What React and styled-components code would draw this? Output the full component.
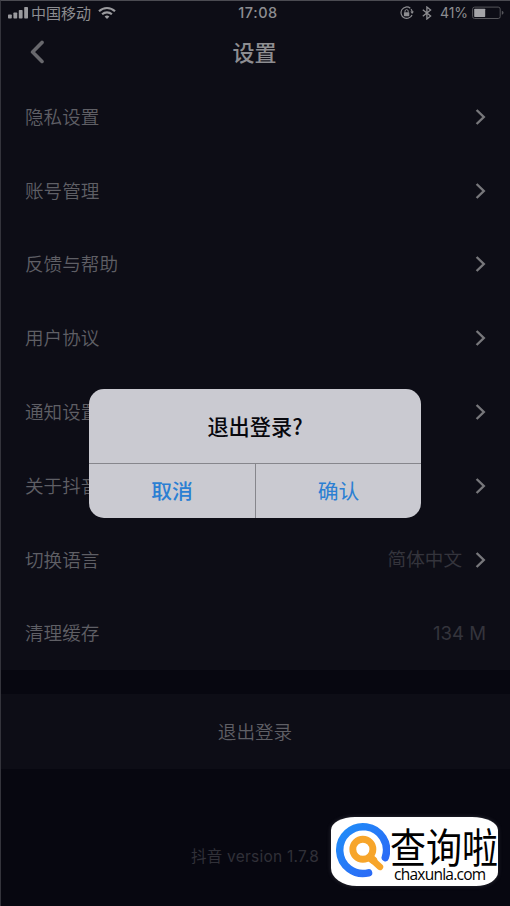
import React from 'react'
import styled, { createGlobalStyle } from 'styled-components'


const GlobalStyle = createGlobalStyle`
  * {
    box-sizing: border-box;
  }

  body {
    margin: 0;
    background-color: #070710;
    font-family: Inter, "Noto Sans CJK SC", sans-serif;
  }
`

const Screen = styled.div`
  position: relative;
  width: 510px;
  height: 906px;
  overflow: hidden;
  display: flex;
  flex-direction: column;
  border-top: 1px solid #4b4b52;
  border-left: 1px solid #34343c;
  background-color: #070710;
`

const StatusBar = styled.div`
  display: grid;
  grid-template-columns: 1fr auto 1fr;
  align-items: center;
  height: 24px;
  padding: 0 6px 0 7px;
  color: #8d8d91;
  background-color: #0d0d16;
  font-size: 15px;
  line-height: 24px;
`

const StatusGroup = styled.div`
  display: flex;
  align-items: center;
  justify-content: ${props => props.$end ? 'flex-end' : 'flex-start'};

  svg {
    flex: none;
  }
`

const Carrier = styled.span`
  margin: 0 7px 0 3px;
  font-family: "Noto Sans CJK SC", sans-serif;
  font-size: 15px;
`

const Clock = styled.span`
  padding-left: 4px;
  font-size: 14.5px;
  font-weight: 500;
  letter-spacing: 0.6px;
`

const Battery = styled.span`
  margin: 0 4px 0 8px;
  font-size: 14px;
  letter-spacing: -0.1px;
`

const Header = styled.header`
  display: grid;
  grid-template-columns: 60px 1fr 60px;
  align-items: center;
  height: 54px;
  padding-bottom: 1px;
  background-color: #0d0d16;
`

const Back = styled.button`
  display: flex;
  padding: 0 0 0 28px;
  border: 0;
  background: none;
`

const Title = styled.h1`
  margin: -1px 0 0;
  padding-right: 2px;
  color: #8d8d91;
  font-family: "Noto Sans CJK SC", sans-serif;
  font-size: 22px;
  font-weight: 500;
  line-height: 30px;
  text-align: center;
`

const List = styled.div`
  padding-bottom: 0.6px;
  background-color: #0d0d16;
`

const Row = styled.div`
  display: flex;
  align-items: center;
  height: 73.8px;
  padding: 0 24px 0 24px;

  svg {
    margin-top: 2px;
  }
`

const RowLabel = styled.span`
  flex: 1;
  color: #5f5f65;
  font-family: "Noto Sans CJK SC", sans-serif;
  font-size: 18.6px;
  font-weight: 350;
  line-height: 28px;
`

const RowValue = styled.span`
  margin-right: ${props => props.$gap ? props.$gap : '0px'};
  padding-top: 1px;
  color: #34343c;
  font-size: 18.6px;
  font-weight: 400;
  line-height: 28px;
`

const Logout = styled.button`
  height: 75px;
  margin-top: 24px;
  padding: 0 1px 2px 0;
  border: 0;
  color: #5f5f65;
  background-color: #0d0d16;
  font-family: "Noto Sans CJK SC", sans-serif;
  font-size: 18.6px;
  font-weight: 350;
`

const Version = styled.div`
  margin-top: 76px;
  padding-left: 190px;
  color: #303038;
  font-size: 15.5px;
  letter-spacing: 0.23px;
  line-height: 24px;
`

const Dialog = styled.div`
  position: absolute;
  top: 388px;
  left: 88px;
  width: 332px;
  height: 129px;
  display: flex;
  flex-direction: column;
  overflow: hidden;
  border-radius: 15px;
  background-color: #cacad1;
  font-family: "Noto Sans CJK SC", sans-serif;
`

const DialogTitle = styled.div`
  display: flex;
  align-items: center;
  justify-content: center;
  height: 74px;
  padding-bottom: 1px;
  color: #08080d;
  font-size: 21.2px;
  font-weight: 500;
`

const DialogActions = styled.div`
  display: grid;
  grid-template-columns: 1fr 1fr;
  flex: 1;
  border-top: 1px solid #86868c;
`

const DialogButton = styled.button`
  padding: 0 0 2px;
  border: 0;
  border-left: ${props => props.$divided ? '1px solid #86868c' : '0'};
  color: #2b7fd3;
  background: none;
  font-family: inherit;
  font-size: 20.8px;
  font-weight: ${props => props.$strong ? 500 : 400};
`

const Watermark = styled.div`
  position: absolute;
  top: 816px;
  left: 330px;
  width: 167px;
  height: 69px;
  display: flex;
  align-items: flex-start;
  background-color: #fff;
  border-radius: 24px 26px 22px 26px / 13px 13px 14px 18px;
  box-shadow: 0 0 4px rgba(130, 130, 140, 0.3);
`

const WatermarkText = styled.div`
  display: flex;
  flex-direction: column;
  color: #000;
`

const WatermarkName = styled.div`
  height: 46px;
  font-family: "Noto Sans CJK SC", sans-serif;
  font-size: 36px;
  line-height: 56px;
  white-space: nowrap;
  transform: scaleY(1.13);
  transform-origin: 0 30px;
`

const WatermarkUrl = styled.div`
  padding-left: 4px;
  font-family: "Open Sans", sans-serif;
  font-size: 15.5px;
  font-weight: 500;
  letter-spacing: -0.75px;
  line-height: 22px;
  white-space: nowrap;
`

const SignalIcon = () => (
  <svg width="20" height="14" viewBox="0 0 20 14" fill="#9a9a9e">
    <rect x="0" y="8.5" width="3.8" height="4" rx="0.7" />
    <rect x="5.4" y="6.6" width="3.8" height="5.9" rx="0.7" />
    <rect x="10.8" y="4" width="3.8" height="8.5" rx="0.7" />
    <rect x="16.2" y="1" width="3.8" height="11.5" rx="0.7" />
  </svg>
)

const WifiIcon = () => (
  <svg width="18" height="14" viewBox="0 0 18 14" fill="none" stroke="#9a9a9e" strokeWidth="2.2">
    <path d="M1 5.2C5.6.9 12.4.9 17 5.2" />
    <path d="M4.1 8.3C6.9 5.8 11.1 5.8 13.9 8.3" />
    <path d="M9 13 6.6 10.4Q9 8.5 11.4 10.4Z" fill="#9a9a9e" stroke="none" />
  </svg>
)

const RotationLockIcon = () => (
  <svg width="14" height="14" viewBox="0 0 14 14" fill="none" stroke="#8d8d91">
    <path d="M10.3 2.2A5.7 5.7 0 1 0 12 8.9" strokeWidth="1.2" />
    <path d="M11 3.2A5.7 5.7 0 0 1 12.3 6" strokeWidth="1.2" />
    <path d="M10.3 5.6h3.6L12.1 8.1Z" fill="#8d8d91" stroke="none" />
    <rect x="3.9" y="6.2" width="5.4" height="4" rx="0.6" fill="#8d8d91" stroke="none" />
    <path d="M5 6.5V5.2a1.6 1.6 0 0 1 3.2 0v1.3" strokeWidth="1" />
  </svg>
)

const BluetoothIcon = () => (
  <svg width="10" height="14" viewBox="0 0 10 14" fill="none" stroke="#8d8d91" strokeWidth="1.3">
    <path d="M.8 3.8 8.6 10 4.9 13V1L8.6 4 .8 10.2" />
  </svg>
)

const BatteryIcon = () => (
  <svg width="32" height="14" viewBox="0 0 32 14">
    <rect x="0.6" y="1.1" width="27.6" height="11.4" rx="2" fill="none" stroke="#55555a" />
    <rect x="2.2" y="2.7" width="11" height="8.2" rx="0.6" fill="#a3a3a7" />
    <path d="M29.8 4.8q1.8.4 1.8 2t-1.8 2Z" fill="#55555a" />
  </svg>
)

const BackIcon = () => (
  <svg width="17" height="24" viewBox="0 0 17 24" fill="none" stroke="#68686d" strokeWidth="3.6" strokeLinecap="round">
    <path d="M13 2.4 3.6 12 13 21.4" strokeLinejoin="round" />
  </svg>
)

const Chevron = () => (
  <svg width="12" height="18" viewBox="0 0 12 18" fill="none" stroke="#77777b" strokeWidth="2.4">
    <path d="M2.6 2 9.8 9 2.6 16" />
  </svg>
)

const WatermarkLogo = () => (
  <svg width="60" height="69" viewBox="0 0 60 69" fill="none">
    <defs>
      <linearGradient id="ring" x1="0" y1="0" x2="1" y2="1">
        <stop offset="0" stopColor="#1f8df8" />
        <stop offset="1" stopColor="#2d65f6" />
      </linearGradient>
    </defs>
    <path d="M55.2 40.7A23.8 23.8 0 1 0 38.2 56.2" stroke="url(#ring)" strokeWidth="7.6" strokeLinecap="round" />
    <circle cx="32.4" cy="32.2" r="10.2" stroke="#f7a52a" strokeWidth="7" />
    <path d="M40 41 43 43.5" stroke="#f7a52a" strokeWidth="8" strokeLinecap="round" />
    <path d="M42 43 49.8 50.2" stroke="#f7a52a" strokeWidth="6.6" strokeLinecap="round" />
  </svg>
)

const rows = [
  { label: '隐私设置', arrow: true },
  { label: '账号管理', arrow: true },
  { label: '反馈与帮助', arrow: true },
  { label: '用户协议', arrow: true },
  { label: '通知设置', arrow: true },
  { label: '关于抖音', arrow: true },
  { label: '切换语言', value: '简体中文', arrow: true },
  { label: '清理缓存', value: '134 M' },
]

const App = () => {
  return (
    <>
      <GlobalStyle />
      <Screen>
        <StatusBar>
          <StatusGroup>
            <SignalIcon />
            <Carrier>中国移动</Carrier>
            <WifiIcon />
          </StatusGroup>
          <Clock>17:08</Clock>
          <StatusGroup $end>
            <RotationLockIcon />
            <span>&nbsp;&nbsp;</span>
            <BluetoothIcon />
            <Battery>41%</Battery>
            <BatteryIcon />
          </StatusGroup>
        </StatusBar>

        <Header>
          <Back aria-label="返回"><BackIcon /></Back>
          <Title>设置</Title>
        </Header>

        <List>
          {rows.map(row => (
            <Row key={row.label}>
              <RowLabel>{row.label}</RowLabel>
              {row.value && <RowValue $gap={row.arrow && '12px'}>{row.value}</RowValue>}
              {row.arrow && <Chevron />}
            </Row>
          ))}
        </List>

        <Logout>退出登录</Logout>
        <Version>抖音 version 1.7.8</Version>

        <Dialog role="dialog">
          <DialogTitle>退出登录?</DialogTitle>
          <DialogActions>
            <DialogButton $strong>取消</DialogButton>
            <DialogButton $divided>确认</DialogButton>
          </DialogActions>
        </Dialog>

        <Watermark>
          <WatermarkLogo />
          <WatermarkText>
            <WatermarkName>查询啦</WatermarkName>
            <WatermarkUrl>chaxunla.com</WatermarkUrl>
          </WatermarkText>
        </Watermark>
      </Screen>
    </>
  )
}

export default App
